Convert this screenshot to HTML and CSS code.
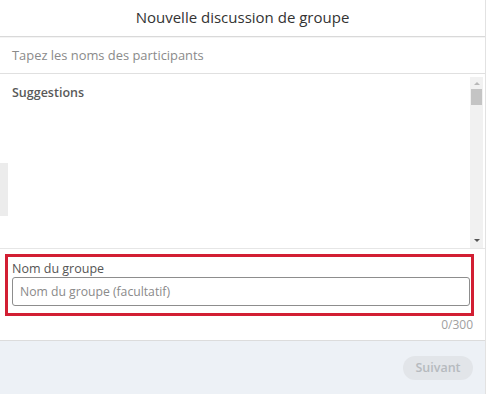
FILE: index.html
```html
<!DOCTYPE html>
<html lang="fr">
<head>
<meta charset="utf-8">
<link rel="stylesheet" href="styles.css">
</head>
<body>
<div class="modal">
  <header class="header">Nouvelle discussion de groupe</header>
  <div class="search">Tapez les noms des participants</div>
  <div class="list">
    <div class="list-content">
      <div class="suggestions">Suggestions</div>
    </div>
    <div class="scrollbar">
      <span class="arrow up"></span>
      <span class="thumb"></span>
      <span class="track-fill"></span>
      <span class="arrow down"></span>
    </div>
    <span class="edge-shadow"></span>
  </div>
  <div class="name-section">
    <div class="highlight">
      <label class="label">Nom du groupe</label>
      <div class="input">Nom du groupe (facultatif)</div>
    </div>
    <div class="counter">0/300</div>
  </div>
  <footer class="footer">
    <button class="next">Suivant</button>
  </footer>
</div>
</body>
</html>
```
FILE: styles.css
```css
html, body {
  margin: 0;
  padding: 0;
  background: #ffffff;
}
body {
  font-family: "Open Sans", "Noto Sans", sans-serif;
  width: 500px;
  height: 414px;
  overflow: hidden;
}
.modal {
  width: 485px;
  border-right: 1px solid #e2e2e2;
  display: flex;
  flex-direction: column;
  background: #fff;
}
.header {
  height: 37px;
  display: flex;
  align-items: center;
  justify-content: center;
  padding-bottom: 3px;
  box-sizing: border-box;
  font-size: 15px;
  color: #333;
  border-bottom: 1px solid #d9d9d9;
  box-shadow: 0 1px 0 #f4f4f4;
}
.search {
  height: 36px;
  display: flex;
  align-items: center;
  padding-left: 12px;
  font-size: 12.9px;
  color: #8a8a8a;
  border-bottom: 1px solid #e0e0e0;
}
.list {
  position: relative;
  height: 174px;
  display: flex;
  border-bottom: 1px solid #e6e6e6;
}
.list-content {
  flex: 1;
  padding: 10px 12px;
}
.suggestions {
  font-size: 12.5px;
  font-weight: 600;
  color: #595959;
}
.scrollbar {
  width: 13px;
  margin-right: 2px;
  margin-top: 3px;
  background: #f1f1f1;
  display: flex;
  flex-direction: column;
  align-items: center;
}
.arrow {
  width: 0;
  height: 0;
  border-left: 3px solid transparent;
  border-right: 3px solid transparent;
  margin: 5px 0 4px;
}
.arrow.up {
  border-bottom: 3px solid #b8b8b8;
}
.arrow.down {
  border-top: 3px solid #555;
  margin: 4px 0 6px;
}
.thumb {
  width: 11px;
  height: 16px;
  background: #c4c4c4;
}
.track-fill {
  flex: 1;
}
.edge-shadow {
  position: absolute;
  left: 0;
  top: 89px;
  width: 8px;
  height: 53px;
  background: #ececec;
}
.name-section {
  height: 92px;
  padding: 5px 0 0 5px;
  box-sizing: border-box;
  border-bottom: 1px solid #dcdcdc;
}
.highlight {
  width: 463px;
  height: 56px;
  border: 3px solid #d21f33;
  box-sizing: content-box;
  display: flex;
  flex-direction: column;
}
.label {
  font-size: 12.5px;
  color: #555;
  padding: 4px 0 0 4px;
  height: 19px;
  box-sizing: border-box;
  line-height: 16px;
}
.input {
  margin: 1px 0 0 4px;
  width: 458px;
  height: 29px;
  border: 1px solid #8d8d8d;
  border-radius: 3px;
  box-sizing: border-box;
  font-size: 12.2px;
  color: #8a8a8a;
  padding-left: 7px;
  display: flex;
  align-items: center;
}
.counter {
  width: 468px;
  text-align: right;
  font-size: 12px;
  color: #a0a0a0;
  margin-top: 0;
}
.footer {
  height: 53px;
  background: #edf1f6;
  display: flex;
  align-items: center;
  justify-content: flex-end;
  padding-right: 12px;
}
.next {
  font-family: inherit;
  font-size: 12.5px;
  font-weight: 600;
  color: #b6babe;
  background: #e2e5e9;
  border: none;
  border-radius: 12px;
  height: 24px;
  width: 70px;
  padding: 0;
}
```
